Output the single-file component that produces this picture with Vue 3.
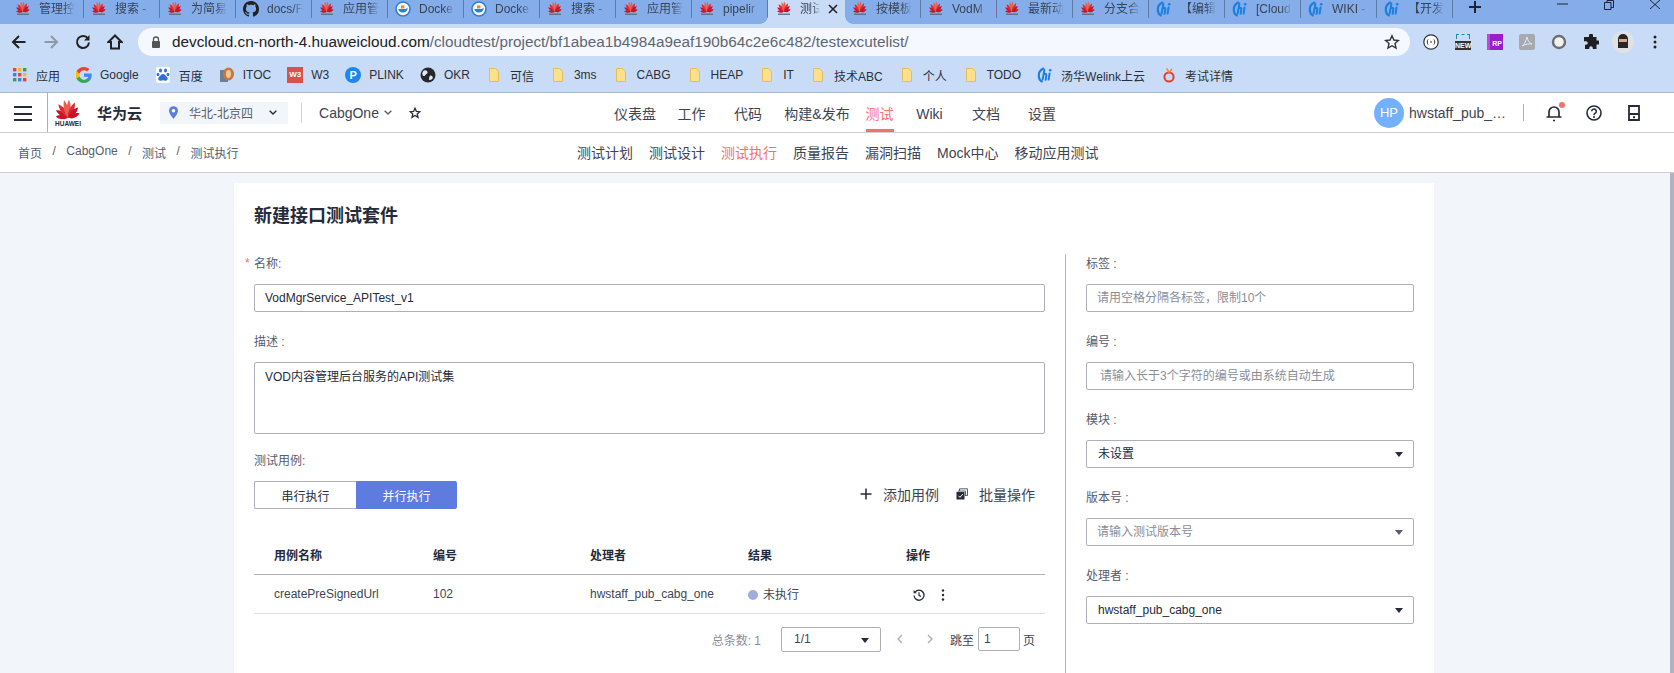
<template>
  <div class="page">
    <svg class="defs" width="0" height="0" aria-hidden="true">
      <defs>
        <g id="hw-petals" transform="translate(8 12.4)">
          <path
            v-for="p in petals"
            :key="p.a"
            d="M0 0C-1.9-2.6-2-6.2-.9-9.4 1-6.8 1.6-3 0 0Z"
            :transform="`rotate(${p.a}) scale(${p.w} ${p.s})`"
            :fill="p.f"
          />
        </g>
      </defs>
      <symbol id="hw" viewBox="0 2 16 11"><use href="#hw-petals" /></symbol>
      <symbol id="hwt" viewBox="0 0 16 16">
        <use href="#hw-petals" transform="translate(0 -1.6)" />
        <rect x="2" y="12.6" width="12" height="1.3" fill="#5b6a80" />
      </symbol>
      <symbol id="gh" viewBox="0 0 16 16">
        <path fill="#222" d="M8 0C3.58 0 0 3.58 0 8c0 3.54 2.29 6.53 5.47 7.59.4.07.55-.17.55-.38 0-.19-.01-.82-.01-1.49-2.01.37-2.53-.49-2.69-.94-.09-.23-.48-.94-.82-1.13-.28-.15-.68-.52-.01-.53.63-.01 1.08.58 1.23.82.72 1.21 1.87.87 2.33.66.07-.52.28-.87.51-1.07-1.78-.2-3.64-.89-3.64-3.95 0-.87.31-1.59.82-2.15-.08-.2-.36-1.02.08-2.12 0 0 .67-.21 2.2.82.64-.18 1.32-.27 2-.27.68 0 1.36.09 2 .27 1.53-1.04 2.2-.82 2.2-.82.44 1.1.16 1.92.08 2.12.51.56.82 1.27.82 2.15 0 3.07-1.87 3.75-3.65 3.95.29.25.54.73.54 1.48 0 1.07-.01 1.93-.01 2.2 0 .21.15.46.55.38A8.013 8.013 0 0016 8c0-4.42-3.58-8-8-8z" />
      </symbol>
      <symbol id="dk" viewBox="0 0 16 16">
        <circle cx="8" cy="8" r="7" fill="#f4f7fb" stroke="#2f7fd0" stroke-width="1.6" />
        <path fill="#2f7fd0" d="M3.4 8h7.4c.4-.8 1.2-1 2-.8-.4 2.6-2.4 4.4-5 4.4-2.4 0-4.200-1.400-4.400-3.600Z" />
        <rect x="6" y="4.400" width="3.400" height="3" fill="#e58a3a" />
      </symbol>
      <symbol id="wl" viewBox="0 0 16 16">
        <path fill="none" stroke="#1a7fe0" stroke-width="2.200" stroke-linecap="round" d="M6.400 1.600C3 3.200 1.600 6 1.800 9c.1 2.600 1.400 4.600 3 5.400" />
        <path fill="none" stroke="#1a7fe0" stroke-width="2" stroke-linecap="round" d="M7.400 3 5.600 12.600M6.400 7.800c1.200-1.200 3-1.400 3 .2L8.600 12.800" />
        <path fill="none" stroke="#1a7fe0" stroke-width="2" stroke-linecap="round" d="M12.600 6.400 11.600 12.600" />
        <circle cx="13.200" cy="3.200" r="1.300" fill="#1a7fe0" />
      </symbol>
      <symbol id="apps" viewBox="0 0 16 16">
        <rect v-for="c in appDots" :key="c.k" :x="c.x" :y="c.y" width="3.400" height="3.400" :fill="c.f" />
      </symbol>
      <symbol id="goog" viewBox="0 0 16 16">
        <path fill="#4285F4" d="M15.700 8.200c0-.6-.1-1.100-.2-1.600H8v3.100h4.300c-.2 1-.8 1.800-1.600 2.400v2h2.600c1.500-1.400 2.400-3.500 2.400-5.900z" />
        <path fill="#34A853" d="M8 16c2.200 0 4-.7 5.300-1.900l-2.600-2c-.7.5-1.600.8-2.700.8-2.100 0-3.900-1.400-4.500-3.300H.6v2.100C1.900 14.300 4.700 16 8 16z" />
        <path fill="#FBBC05" d="M3.500 9.600c-.3-1-.3-2.100 0-3.200V4.300H.6c-1.100 2.300-1.100 5 0 7.400z" />
        <path fill="#EA4335" d="M8 3.200c1.200 0 2.200.4 3.100 1.200l2.300-2.300C12 .8 10.200 0 8 0 4.700 0 1.900 1.700.6 4.300l2.900 2.100C4.100 4.600 5.900 3.200 8 3.200z" />
      </symbol>
      <symbol id="baidu" viewBox="0 0 16 16">
        <rect x="1" y="0" width="14" height="16" rx="2" fill="#fff" />
        <g fill="#2f6fde">
          <ellipse cx="5.500" cy="3.500" rx="1.500" ry="2" />
          <ellipse cx="10.500" cy="3.500" rx="1.500" ry="2" />
          <ellipse cx="3" cy="7.500" rx="1.400" ry="1.800" />
          <ellipse cx="13" cy="7.500" rx="1.400" ry="1.800" />
          <path d="M8 7c-2 0-2.600 2-4 3-1.500 1.200-.6 4 1.500 3.700 1-.1 1.700-.4 2.500-.4s1.500.3 2.500.4c2.100.3 3-2.500 1.500-3.700-1.400-1-2-3-4-3z" />
        </g>
      </symbol>
      <symbol id="itoc" viewBox="0 0 16 16">
        <rect x="1" y="3" width="8" height="12" fill="#6e7f94" />
        <ellipse cx="9.500" cy="7" rx="5.500" ry="6.500" fill="#c9773a" />
        <ellipse cx="9.500" cy="7" rx="2.500" ry="4" fill="#e9c8a0" />
      </symbol>
      <symbol id="okr" viewBox="0 0 16 16">
        <circle cx="8" cy="8" r="7.500" fill="#26282c" />
        <path fill="#e6e8ee" d="M5 3.200c1.600 0 2.400.8 2.600 2 .2 1.300-1 1.500-1.800 2.300-.7.7-.7 1.800-2 1.600C2.800 8.900 2 7.300 2.400 5.800 2.800 4.300 3.800 3.200 5 3.200zM10.600 8.400c1.200.1 2.200 1 2.200 2.100 0 1.200-1.500 2.500-2.800 2.500-1 0-1.200-.9-.9-1.800.3-1 .3-2.900 1.500-2.800z" />
      </symbol>
      <symbol id="folder" viewBox="0 0 16 16">
        <path fill="#FCE08B" stroke="#E7BE55" d="M3.500 1.500h5.800l3.200 3V14.500h-9Z" />
      </symbol>
      <symbol id="apple" viewBox="0 0 16 16">
        <circle cx="8" cy="10" r="4.600" fill="none" stroke="#e2402e" stroke-width="2" />
        <path fill="none" stroke="#e88a2e" stroke-width="1.500" d="M8 5.400 5.600 1.400M8 5.400 11 2" />
      </symbol>
    </svg>

    <div class="tabstrip">
      <div v-for="t in tabs" :key="t.id" class="tab" :class="{ active: t.active }">
        <svg class="tab-ico"><use :href="`#${t.icon}`" /></svg>
        <span class="tab-text">{{ t.text }}</span>
        <svg v-if="t.active" class="tab-close" viewBox="0 0 10 10">
          <path d="M1 1l8 8M9 1 1 9" stroke="#222" stroke-width="1.600" />
        </svg>
      </div>
      <svg class="new-tab" viewBox="0 0 12 12"><path d="M6 0v12M0 6h12" stroke="#1f2430" stroke-width="2" /></svg>
      <div class="win-ctrl">
        <svg class="win-min" viewBox="0 0 11 2"><path d="M0 1h11" stroke="#1f2430" /></svg>
        <svg class="win-max" viewBox="0 0 10 10"><path d="M.5 2.500h6.500v7H.5zM3 2.500V.5h6.500v7H7" fill="none" stroke="#1f2430" /></svg>
        <svg class="win-x" viewBox="0 0 10 9"><path d="M0 0l10 9M10 0 0 9" stroke="#1f2430" /></svg>
      </div>
    </div>

    <div class="toolbar">
      <div class="nav-btns">
        <svg viewBox="0 0 16 16"><path d="M14.500 8h-12M8 2 2 8l6 6" fill="none" stroke="#222" stroke-width="2" /></svg>
        <svg viewBox="0 0 16 16"><path d="M1.500 8h12M8 2l6 6-6 6" fill="none" stroke="#8d98a8" stroke-width="2" /></svg>
        <svg viewBox="0 0 16 16"><path d="M13 4.600A6 6 0 1 0 14 8.500" fill="none" stroke="#222" stroke-width="2" /><path d="M14.500 1v5.500H9Z" fill="#222" /></svg>
        <svg viewBox="0 0 16 16"><path d="M8 1.500 1.500 8H4v6.500h8V8h2.500Z" fill="none" stroke="#222" stroke-width="2" /></svg>
      </div>
      <div class="address">
        <svg class="lock" viewBox="0 0 10 12"><path d="M2.500 5V3.500a2.500 2.500 0 0 1 5 0V5" fill="none" stroke="#555" stroke-width="1.300" /><rect x="1" y="5" width="8" height="7" rx="1" fill="#555" /></svg>
        <span class="url"><span class="url-host">devcloud.cn-north-4.huaweicloud.com</span>/cloudtest/project/bf1abea1b4984a9eaf190b64c2e6c482/testexcutelist/</span>
        <svg class="addr-star" viewBox="0 0 16 16"><path d="M8 1.800 9.900 6l4.500.5-3.400 3 1 4.500L8 11.700 4 14l1-4.500-3.400-3L6.100 6Z" fill="none" stroke="#333" stroke-width="1.400" /></svg>
      </div>
      <div class="exts">
        <svg viewBox="0 0 16 16"><circle cx="8" cy="8" r="7.200" fill="#fff" stroke="#333" stroke-width="1.200" /><path d="M5 5.500c-1 1.500-1 3.500 0 5M11 5.500c1 1.500 1 3.500 0 5M7 8h2" fill="none" stroke="#333" /></svg>
        <div class="ext-new"><span class="ext-new-top"></span><span class="ext-new-text">NEW</span></div>
        <div class="ext-rp">RP</div>
        <svg viewBox="0 0 16 16"><rect width="16" height="16" rx="2" fill="#a6a9ae" /><path d="M8 3c.6 3 2 6 5 7-3-.4-7 .2-9.500 2 2-1.800 4-6 4.500-9Z" fill="none" stroke="#e8e8e8" /></svg>
        <svg viewBox="0 0 16 16"><circle cx="8" cy="8" r="6" fill="#f2f2f2" stroke="#6d6d6d" stroke-width="2.400" /></svg>
        <svg viewBox="0 0 16 16"><path fill="#1f1f1f" d="M6 1.500a2 2 0 0 1 4 0V3h3.500v3.500H15a2 2 0 0 1 0 4h-1.500V15H9.800v-1a1.800 1.800 0 0 0-3.600 0v1H2v-4.200h1a1.800 1.800 0 0 0 0-3.600H1V3h5Z" /></svg>
        <svg viewBox="0 0 22 22" class="ext-ninja"><circle cx="11" cy="11" r="11" fill="#dfe1e4" /><path d="M6 8a5 5 0 0 1 10 0v9H6Z" fill="#26262a" /><rect x="7" y="8" width="8" height="3" fill="#d8a988" /></svg>
        <svg viewBox="0 0 16 16"><g fill="#222"><circle cx="8" cy="3" r="1.500" /><circle cx="8" cy="8" r="1.500" /><circle cx="8" cy="13" r="1.500" /></g></svg>
      </div>
    </div>

    <div class="bookmarks">
      <div v-for="b in bookmarks" :key="b.text" class="bookmark">
        <span v-if="b.box" class="bm-box" :class="b.icon">{{ b.box }}</span>
        <svg v-else class="bm-ico"><use :href="`#${b.icon}`" /></svg>
        <span>{{ b.text }}</span>
      </div>
    </div>

    <header class="topbar">
      <div class="menu-btn">
        <span></span><span></span><span></span>
      </div>
      <div class="brand-logo">
        <svg class="petals"><use href="#hw" /></svg>
        <span class="brand-word">HUAWEI</span>
      </div>
      <span class="brand-name">华为云</span>
      <div class="region">
        <svg class="pin" viewBox="0 0 10 14"><path d="M5 0a5 5 0 0 1 5 5c0 3.500-5 9-5 9S0 8.500 0 5a5 5 0 0 1 5-5Z" fill="#5E7CE0" /><circle cx="5" cy="5" r="2" fill="#fff" /></svg>
        <span class="region-text">华北-北京四</span>
        <svg class="chev" viewBox="0 0 8 5"><path d="M.7.7 4 4l3.300-3.300" fill="none" stroke="#252B3A" stroke-width="1.400" /></svg>
      </div>
      <span class="top-div"></span>
      <span class="project">CabgOne</span>
      <svg class="chev proj-chev" viewBox="0 0 8 5"><path d="M.7.7 4 4l3.300-3.300" fill="none" stroke="#575D6C" stroke-width="1.400" /></svg>
      <svg class="fav" viewBox="0 0 12 12"><path d="M6 1.200 7.400 4.400l3.400.3-2.600 2.200.8 3.400L6 8.500 3 10.300l.8-3.400L1.200 4.700l3.400-.3Z" fill="none" stroke="#252B3A" stroke-width="1.300" /></svg>

      <nav class="main-nav">
        <a v-for="n in mainNav" :key="n" :class="{ on: n === '测试' }"><span>{{ n }}</span></a>
      </nav>

      <div class="user">
        <span class="avatar">HP</span>
        <span class="user-name">hwstaff_pub_…</span>
        <span class="user-div"></span>
        <div class="bell">
          <svg viewBox="0 0 16 18"><path d="M3 12.500V8a5 5 0 0 1 10 0v4.500M.5 13h15M7 16.500h2" fill="none" stroke="#252B3A" stroke-width="1.700" /></svg>
          <i class="bell-dot"></i>
        </div>
        <svg class="help" viewBox="0 0 16 16"><circle cx="8" cy="8" r="7" fill="none" stroke="#252B3A" stroke-width="1.600" /><path d="M5.700 6.300a2.300 2.300 0 1 1 3.600 1.900C8.500 8.800 8 9 8 10.200" fill="none" stroke="#252B3A" stroke-width="1.500" /><circle cx="8" cy="12" r="1" fill="#252B3A" /></svg>
        <svg class="device" viewBox="0 0 12 16"><path d="M1 1h10v14H1ZM1 9h10" fill="none" stroke="#252B3A" stroke-width="1.800" /><rect x="5" y="11.200" width="2" height="2" fill="#252B3A" /></svg>
      </div>
    </header>

    <div class="subbar">
      <div class="crumbs">
        <template v-for="(c, i) in crumbs" :key="c">
          <span v-if="i" class="crumb-sep">/</span>
          <span>{{ c }}</span>
        </template>
      </div>
      <nav class="sub-nav">
        <a v-for="s in subNav" :key="s" :class="{ on: s === '测试执行' }">{{ s }}</a>
      </nav>
    </div>

    <div class="body">
      <main class="content">
        <section class="card">
          <h1 class="title">新建接口测试套件</h1>
          <div class="columns">
            <div class="col-left">
              <label class="field-label"><i class="req">*</i>名称:</label>
              <input class="text-input" type="text" value="VodMgrService_APITest_v1" />
              <label class="field-label mt20">描述 :</label>
              <textarea class="text-area">VOD内容管理后台服务的API测试集</textarea>
              <label class="field-label mt17">测试用例:</label>
              <div class="case-bar">
                <div class="seg">
                  <button class="seg-btn">串行执行</button>
                  <button class="seg-btn seg-on">并行执行</button>
                </div>
                <div class="case-actions">
                  <span class="act"><svg class="plus" viewBox="0 0 12 12"><path d="M6 .5v11M.5 6h11" stroke="#252B3A" stroke-width="1.500" /></svg>添加用例</span>
                  <span class="act"><svg class="batch" viewBox="0 0 12 12"><path d="M3.500 3V.8h8v6.700h-2M2 3.500V3h7.500v5" fill="none" stroke="#575D6C" /><rect x=".5" y="4" width="8" height="7.500" fill="#252B3A" /><path d="M2.500 7.800 4 9.300 6.800 6.200" fill="none" stroke="#fff" /></svg>批量操作</span>
                </div>
              </div>

              <table class="case-table">
                <colgroup>
                  <col class="c1" /><col class="c2" /><col class="c3" /><col class="c3" /><col />
                </colgroup>
                <thead>
                  <tr>
                    <th v-for="h in tableHead" :key="h">{{ h }}</th>
                  </tr>
                </thead>
                <tbody>
                  <tr>
                    <td>createPreSignedUrl</td>
                    <td>102</td>
                    <td>hwstaff_pub_cabg_one</td>
                    <td><span class="status-dot"></span>未执行</td>
                    <td>
                      <div class="row-ops">
                        <svg class="op-hist" viewBox="0 0 12 12"><path d="M2 3.200A5 5 0 1 1 1 6.500" fill="none" stroke="#252B3A" stroke-width="1.300" /><path d="M.6 1v3.200h3.200Z" fill="#252B3A" /><path d="M6 3.300v3l2 1.200" fill="none" stroke="#252B3A" stroke-width="1.200" /></svg>
                        <svg class="op-more" viewBox="0 0 4 12"><g fill="#252B3A"><circle cx="2" cy="1.500" r="1.200" /><circle cx="2" cy="6" r="1.200" /><circle cx="2" cy="10.500" r="1.200" /></g></svg>
                      </div>
                    </td>
                  </tr>
                </tbody>
              </table>

              <div class="pager">
                <span class="pager-total">总条数: 1</span>
                <div class="pager-select">1/1<i class="caret"></i></div>
                <svg class="pager-arrow first" viewBox="0 0 6 10"><path d="M5 1 1 5l4 4" fill="none" stroke="#ADB0B8" stroke-width="1.400" /></svg>
                <svg class="pager-arrow" viewBox="0 0 6 10"><path d="M1 1l4 4-4 4" fill="none" stroke="#ADB0B8" stroke-width="1.400" /></svg>
                <span class="pager-jump">跳至</span>
                <input class="pager-input" type="text" value="1" />
                <span>页</span>
              </div>
            </div>

            <div class="col-right">
              <template v-for="f in sideFields" :key="f.label">
                <label class="field-label side-label">{{ f.label }}</label>
                <div v-if="f.select" class="side-select" :class="{ muted: f.muted }">{{ f.value }}<i class="caret"></i></div>
                <input v-else class="text-input" :class="f.cls" type="text" :placeholder="f.placeholder" />
              </template>
            </div>
          </div>
        </section>
      </main>
      <div class="scrollbar"></div>
    </div>
  </div>
</template>

<script setup>
const petalShape = { 8: [1, 1.08, '#E9604F'], 30: [1.05, 1, '#D92B36'], 52: [1.05, .86, '#CF1126'], 78: [1.05, .74, '#CF1126'] }
const petals = [-78, -52, -30, -8, 8, 30, 52, 78].map((a) => {
  const [w, s, f] = petalShape[Math.abs(a)]
  return { a, w, s, f }
})

const appColors = ['#e0483e', '#f2b632', '#3f9b4f', '#3f7fe0', '#e0483e', '#f2b632', '#3f9b4f', '#3f7fe0', '#e0483e']
const appDots = appColors.map((f, k) => ({ k, f, x: 1 + (k % 3) * 5, y: 1 + Math.floor(k / 3) * 5 }))

const tabNames = [
  ['hwt', '管理控'], ['hwt', '搜索 -'], ['hwt', '为简易'], ['gh', 'docs/F'], ['hwt', '应用管'],
  ['dk', 'Docke'], ['dk', 'Docke'], ['hwt', '搜索 -'], ['hwt', '应用管'], ['hwt', 'pipelir'],
  ['hwt', '测试'], ['hwt', '按模板'], ['hwt', 'VodM'], ['hwt', '最新动'], ['hwt', '分支合'],
  ['wl', '【编辑'], ['wl', '[Cloud'], ['wl', 'WIKI -'], ['wl', '【开发'],
]
const tabs = tabNames.map(([icon, text], id) => ({ id, icon, text, active: id === 10 }))

const bookmarks = [
  { icon: 'apps', text: '应用' },
  { icon: 'goog', text: 'Google' },
  { icon: 'baidu', text: '百度' },
  { icon: 'itoc', text: 'ITOC' },
  { icon: 'w3', box: 'W3', text: 'W3' },
  { icon: 'plink', box: 'P', text: 'PLINK' },
  { icon: 'okr', text: 'OKR' },
  { icon: 'folder', text: '可信' },
  { icon: 'folder', text: '3ms' },
  { icon: 'folder', text: 'CABG' },
  { icon: 'folder', text: 'HEAP' },
  { icon: 'folder', text: 'IT' },
  { icon: 'folder', text: '技术ABC' },
  { icon: 'folder', text: '个人' },
  { icon: 'folder', text: 'TODO' },
  { icon: 'wl', text: '汤华Welink上云' },
  { icon: 'apple', text: '考试详情' },
]

const mainNav = ['仪表盘', '工作', '代码', '构建&发布', '测试', 'Wiki', '文档', '设置']
const crumbs = ['首页', 'CabgOne', '测试', '测试执行']
const subNav = ['测试计划', '测试设计', '测试执行', '质量报告', '漏洞扫描', 'Mock中心', '移动应用测试']
const tableHead = ['用例名称', '编号', '处理者', '结果', '操作']

const sideFields = [
  { label: '标签 :', placeholder: '请用空格分隔各标签，限制10个' },
  { label: '编号 :', placeholder: '请输入长于3个字符的编号或由系统自动生成', cls: 'pad13' },
  { label: '模块 :', select: true, value: '未设置' },
  { label: '版本号 :', select: true, value: '请输入测试版本号', muted: true },
  { label: '处理者 :', select: true, value: 'hwstaff_pub_cabg_one' },
]
</script>

<style>
html, body { margin: 0; height: 100%; overflow: hidden; background: #fff; }
</style>

<style scoped>
.page {
  height: 673px;
  display: flex;
  flex-direction: column;
  overflow: hidden;
  font-family: "Liberation Sans", "Noto Sans CJK SC", sans-serif;
  font-size: 12px;
  color: #252B3A;
}
.defs { position: absolute; }

/* browser chrome */
.tabstrip {
  height: 24px;
  flex: none;
  display: flex;
  padding-left: 8px;
  background: #84ADE9;
  position: relative;
}
.tab {
  width: 76px;
  height: 24px;
  box-sizing: border-box;
  display: flex;
  align-items: flex-start;
  padding: 1px 0 0 7px;
  position: relative;
  color: #3a4354;
}
.tab::after {
  content: "";
  position: absolute;
  right: 0;
  top: 0;
  height: 18px;
  width: 1px;
  background: #5f7ba5;
}
.tab.active {
  width: 77px;
  background: #C9DCF7;
  padding-left: 8px;
}
.tab.active::before,
.tab.active::after {
  content: "";
  position: absolute;
  top: auto;
  bottom: 0;
  width: 8px;
  height: 8px;
}
.tab.active::before {
  left: -8px;
  background: radial-gradient(circle at 0 0, transparent 7.5px, #C9DCF7 8px);
}
.tab.active::after {
  right: -8px;
  background: radial-gradient(circle at 100% 0, transparent 7.5px, #C9DCF7 8px);
}
.tab-ico { width: 16px; height: 16px; flex: none; }
.tab-text {
  margin-left: 8px;
  line-height: 16px;
  width: 36px;
  white-space: nowrap;
  overflow: hidden;
  -webkit-mask-image: linear-gradient(90deg, #000 70%, transparent);
  mask-image: linear-gradient(90deg, #000 70%, transparent);
}
.active .tab-text { width: 20px; }
.tab-close { width: 10px; height: 10px; margin: 3px 0 0 8px; }
.new-tab { width: 12px; height: 12px; margin: 1px 0 0 16px; }
.win-ctrl { position: absolute; inset: 0 auto auto 1557px; display: flex; }
.win-min { width: 11px; height: 2px; margin-top: 3px; }
.win-max { width: 10px; height: 10px; margin-left: 36px; }
.win-x { width: 10px; height: 9px; margin-left: 36px; }

.toolbar {
  height: 38px;
  flex: none;
  box-sizing: border-box;
  background: #C9DCF7;
  display: flex;
  align-items: flex-start;
  padding-top: 4px;
}
.nav-btns {
  width: 138px;
  height: 28px;
  flex: none;
  box-sizing: border-box;
  padding-left: 11px;
  display: flex;
  align-items: center;
  gap: 16px;
}
.nav-btns svg { width: 16px; height: 16px; }
.address {
  width: 1272px;
  height: 28px;
  flex: none;
  box-sizing: border-box;
  background: #F5F8FE;
  border-radius: 14px;
  display: flex;
  align-items: center;
  padding: 0 10px 0 13px;
}
.lock { width: 10px; height: 12px; flex: none; }
.url { margin-left: 11px; font-size: 15.3px; line-height: 30px; color: #5f6672; white-space: nowrap; }
.url-host { color: #202124; }
.addr-star { width: 16px; height: 16px; margin-left: auto; }
.exts {
  height: 28px;
  display: flex;
  align-items: center;
  gap: 16px;
  margin-left: 13px;
}
.exts > svg { width: 16px; height: 16px; flex: none; }
.exts > .ext-ninja { width: 22px; height: 22px; margin: 0 -3px; }
.ext-new { width: 16px; height: 16px; display: flex; flex-direction: column; justify-content: flex-end; position: relative; }
.ext-new-top { position: absolute; top: 0; left: 1px; right: 1px; height: 5px; border: 1px dashed #1d8aa0; border-bottom: 0; box-sizing: border-box; }
.ext-new-text { background: #333; color: #fff; font-size: 7px; font-weight: 700; line-height: 9px; text-align: center; }
.ext-rp { width: 16px; height: 16px; background: #9a1fc4; color: #fff; font-size: 7px; font-weight: 700; line-height: 20px; text-align: right; padding-right: 1px; box-sizing: border-box; border-left: 3px solid #b74ad6; }

.bookmarks {
  height: 31px;
  flex: none;
  box-sizing: border-box;
  background: #C9DCF7;
  border-bottom: 1px solid #a9b8d8;
  display: flex;
  align-items: flex-start;
  gap: 16px;
  padding: 5px 0 0 12px;
  color: #2b3038;
}
.bookmark { display: flex; align-items: center; gap: 8px; height: 16px; white-space: nowrap; }
.bm-ico { width: 16px; height: 16px; flex: none; }
.bm-box { width: 16px; height: 16px; flex: none; color: #fff; font-weight: 700; text-align: center; }
.bm-box.w3 { background: #d9504f; font-size: 8px; line-height: 16px; }
.bm-box.plink { background: #1a86f2; border-radius: 50%; font-size: 11px; line-height: 16px; }

/* devcloud header */
.topbar {
  height: 40px;
  flex: none;
  box-sizing: border-box;
  border-bottom: 1px solid #CFCFCF;
  background: #fff;
  display: flex;
  align-items: center;
  position: relative;
}
.menu-btn {
  width: 48px;
  height: 39px;
  flex: none;
  box-sizing: border-box;
  border-right: 1px solid #ADB0B8;
  padding: 13px 0 0 14px;
  display: flex;
  flex-direction: column;
  gap: 4.5px;
}
.menu-btn span { width: 18px; height: 2px; background: #252B3A; }
.brand-logo { margin-left: 6px; width: 28px; display: flex; flex-direction: column; align-items: center; }
.petals { width: 28px; height: 20px; }
.brand-word { font-size: 6.5px; font-weight: 700; line-height: 7px; margin-top: 1px; }
.brand-name { margin-left: 15px; font-size: 15px; font-weight: 700; }
.region {
  margin-left: 18px;
  width: 128px;
  height: 22px;
  box-sizing: border-box;
  background: #F2F5F9;
  display: flex;
  align-items: center;
  padding-left: 9px;
  color: #575D6C;
}
.pin { width: 9px; height: 13px; }
.region-text { margin-left: 11px; }
.chev { width: 8px; height: 5px; }
.region .chev { margin-left: 16px; }
.top-div { width: 1px; height: 20px; margin-left: 13px; background: #C8D2E0; }
.project { margin-left: 17px; font-size: 14px; color: #3e4454; }
.proj-chev { margin-left: 5px; }
.fav { width: 12px; height: 12px; margin-left: 17px; }

.main-nav {
  position: absolute;
  left: 607px;
  top: 0;
  height: 39px;
  display: grid;
  grid-template-columns: 56px 57px 56px 82px 43px 57px 56px 56px;
  font-size: 14px;
  color: #3e4454;
}
.main-nav a { display: flex; justify-content: center; }
.main-nav span { line-height: 42px; height: 39px; box-sizing: border-box; white-space: nowrap; }
.main-nav .on span { color: #F66F6A; border-bottom: 3px solid #F66F6A; }

.user { margin-left: auto; display: flex; align-items: center; padding-right: 34px; }
.avatar {
  width: 30px;
  height: 30px;
  border-radius: 50%;
  background: #73B0FF;
  color: #fff;
  font-size: 13px;
  line-height: 30px;
  text-align: center;
}
.user-name { margin-left: 5px; width: 101px; font-size: 14px; color: #3e4454; white-space: nowrap; }
.user-div { margin-left: 13px; width: 1px; height: 17px; background: #ADB0B8; }
.bell { margin-left: 22px; width: 16px; height: 18px; position: relative; }
.bell svg { width: 16px; height: 18px; }
.bell-dot { position: absolute; top: -2px; right: -3px; width: 6px; height: 6px; border-radius: 50%; background: #F66F6A; }
.help { margin-left: 24px; width: 16px; height: 16px; }
.device { margin-left: 26px; width: 12px; height: 16px; }

.subbar {
  height: 40px;
  flex: none;
  box-sizing: border-box;
  border-bottom: 1px solid #CFCFCF;
  background: #fff;
  display: flex;
  align-items: center;
}
.crumbs { width: 577px; flex: none; box-sizing: border-box; padding-left: 18px; display: flex; gap: 10.5px; color: #575D6C; }
.sub-nav { display: flex; gap: 16px; margin-top: -1px; font-size: 14px; color: #3e4454; }
.sub-nav .on { color: #F66F6A; }

/* page */
.body { flex: 1; min-height: 0; display: flex; background: #F2F5F9; }
.content { flex: 1; min-width: 0; padding: 10px 0 0 234px; }
.scrollbar { width: 4px; background: #B1B4C0; flex: none; }
.card { width: 1200px; height: 600px; box-sizing: border-box; background: #fff; padding-left: 20px; }
.title { margin: 0; padding-top: 20px; height: 71px; box-sizing: border-box; font-size: 18px; line-height: 26px; font-weight: 700; }
.columns { display: flex; align-items: stretch; height: 430px; }
.col-left {
  width: 791px;
  flex: none;
  display: flex;
  flex-direction: column;
}
.col-right {
  margin-left: 20px;
  width: 349px;
  flex: none;
  box-sizing: border-box;
  border-left: 1px solid #B1B4C0;
  padding-left: 20px;
  display: flex;
  flex-direction: column;
}
.field-label { height: 20px; line-height: 20px; color: #575D6C; display: block; margin-bottom: 10px; position: relative; }
.mt20 { margin-top: 20px; }
.mt17 { margin-top: 17px; }
.req { position: absolute; left: -9px; top: -1px; font-style: normal; color: #F66F6A; }
.text-input {
  height: 28px;
  width: 100%;
  box-sizing: border-box;
  flex: none;
  border: 1px solid #ADB0B8;
  border-radius: 2px;
  padding: 0 10px;
  margin: 0;
  outline: none;
  font: inherit;
  color: #252B3A;
  background: #fff;
}
.text-input::placeholder { color: #8A8E99; opacity: 1; }
.pad13 { padding-left: 13px; }
.text-area {
  height: 72px;
  flex: none;
  box-sizing: border-box;
  border: 1px solid #ADB0B8;
  border-radius: 2px;
  padding: 5px 10px;
  margin: 0;
  outline: none;
  resize: none;
  font: inherit;
  line-height: 18px;
  color: #252B3A;
}
.side-label { margin-bottom: 10px; }
.side-label:not(:first-child) { margin-top: 20px; }
.side-select {
  height: 28px;
  flex: none;
  box-sizing: border-box;
  border: 1px solid #ADB0B8;
  border-radius: 2px;
  padding-left: 11px;
  line-height: 26px;
  position: relative;
}
.side-select.muted { color: #8A8E99; padding-left: 10px; }
.caret {
  position: absolute;
  right: 10px;
  top: 11px;
  width: 0;
  height: 0;
  border: 4px solid transparent;
  border-top: 5px solid #252B3A;
  border-bottom: 0;
}
.muted .caret { border-top-color: #575D6C; }

.case-bar { display: flex; justify-content: space-between; align-items: center; height: 28px; flex: none; }
.seg { display: flex; }
.seg-btn {
  width: 102px;
  height: 28px;
  box-sizing: border-box;
  margin: 0;
  padding: 0;
  border: 1px solid #ADB0B8;
  border-right: 0;
  border-radius: 2px 0 0 2px;
  background: #fff;
  color: #252B3A;
  font: inherit;
}
.seg-on { width: 101px; background: #5E7CE0; border: 1px solid #5E7CE0; border-radius: 0 2px 2px 0; color: #fff; }
.case-actions { display: flex; padding-right: 10px; gap: 17px; margin-top: -2px; font-size: 14px; color: #3e4454; }
.act { display: flex; align-items: center; }
.plus { width: 12px; height: 12px; margin-right: 11px; }
.batch { width: 12px; height: 12px; margin-right: 11px; }

.case-table { width: 791px; table-layout: fixed; border-collapse: collapse; margin-top: 29px; flex: none; }
.c1 { width: 159px; }
.c2 { width: 157px; }
.c3 { width: 158px; }
.case-table th {
  height: 36px;
  padding: 0 0 2px 20px;
  box-sizing: border-box;
  text-align: left;
  font-weight: 700;
  border-bottom: 1px solid #ADB0B8;
}
.case-table td {
  height: 38px;
  padding: 0 0 0 20px;
  border-bottom: 1px solid #DFE1E6;
  color: #3e4454;
}
.status-dot { display: inline-block; width: 10px; height: 10px; border-radius: 50%; background: #9FAEDC; margin-right: 5px; vertical-align: -1px; }
.row-ops { display: flex; align-items: center; padding: 3px 0 0 7px; }
.op-hist { width: 12px; height: 12px; }
.op-more { width: 4px; height: 12px; margin-left: 16px; }

.pager { display: flex; justify-content: flex-end; align-items: center; height: 25px; margin-top: 13px; padding-right: 10px; flex: none; color: #3e4454; }
.pager-total { color: #8A8E99; }
.pager-select {
  width: 100px;
  height: 25px;
  box-sizing: border-box;
  margin-left: 20px;
  border: 1px solid #ADB0B8;
  border-radius: 2px;
  padding-left: 12px;
  line-height: 23px;
  position: relative;
}
.pager-select .caret { top: 10px; right: 11px; }
.pager-arrow { width: 6px; height: 10px; margin-left: 24px; }
.pager-arrow.first { margin-left: 16px; }
.pager-jump { margin-left: 17px; }
.pager-input {
  width: 42px;
  height: 24px;
  box-sizing: border-box;
  margin: 0 3px 0 4px;
  border: 1px solid #ADB0B8;
  border-radius: 2px;
  padding: 0 5px;
  outline: none;
  font: inherit;
  color: #3e4454;
}
</style>
